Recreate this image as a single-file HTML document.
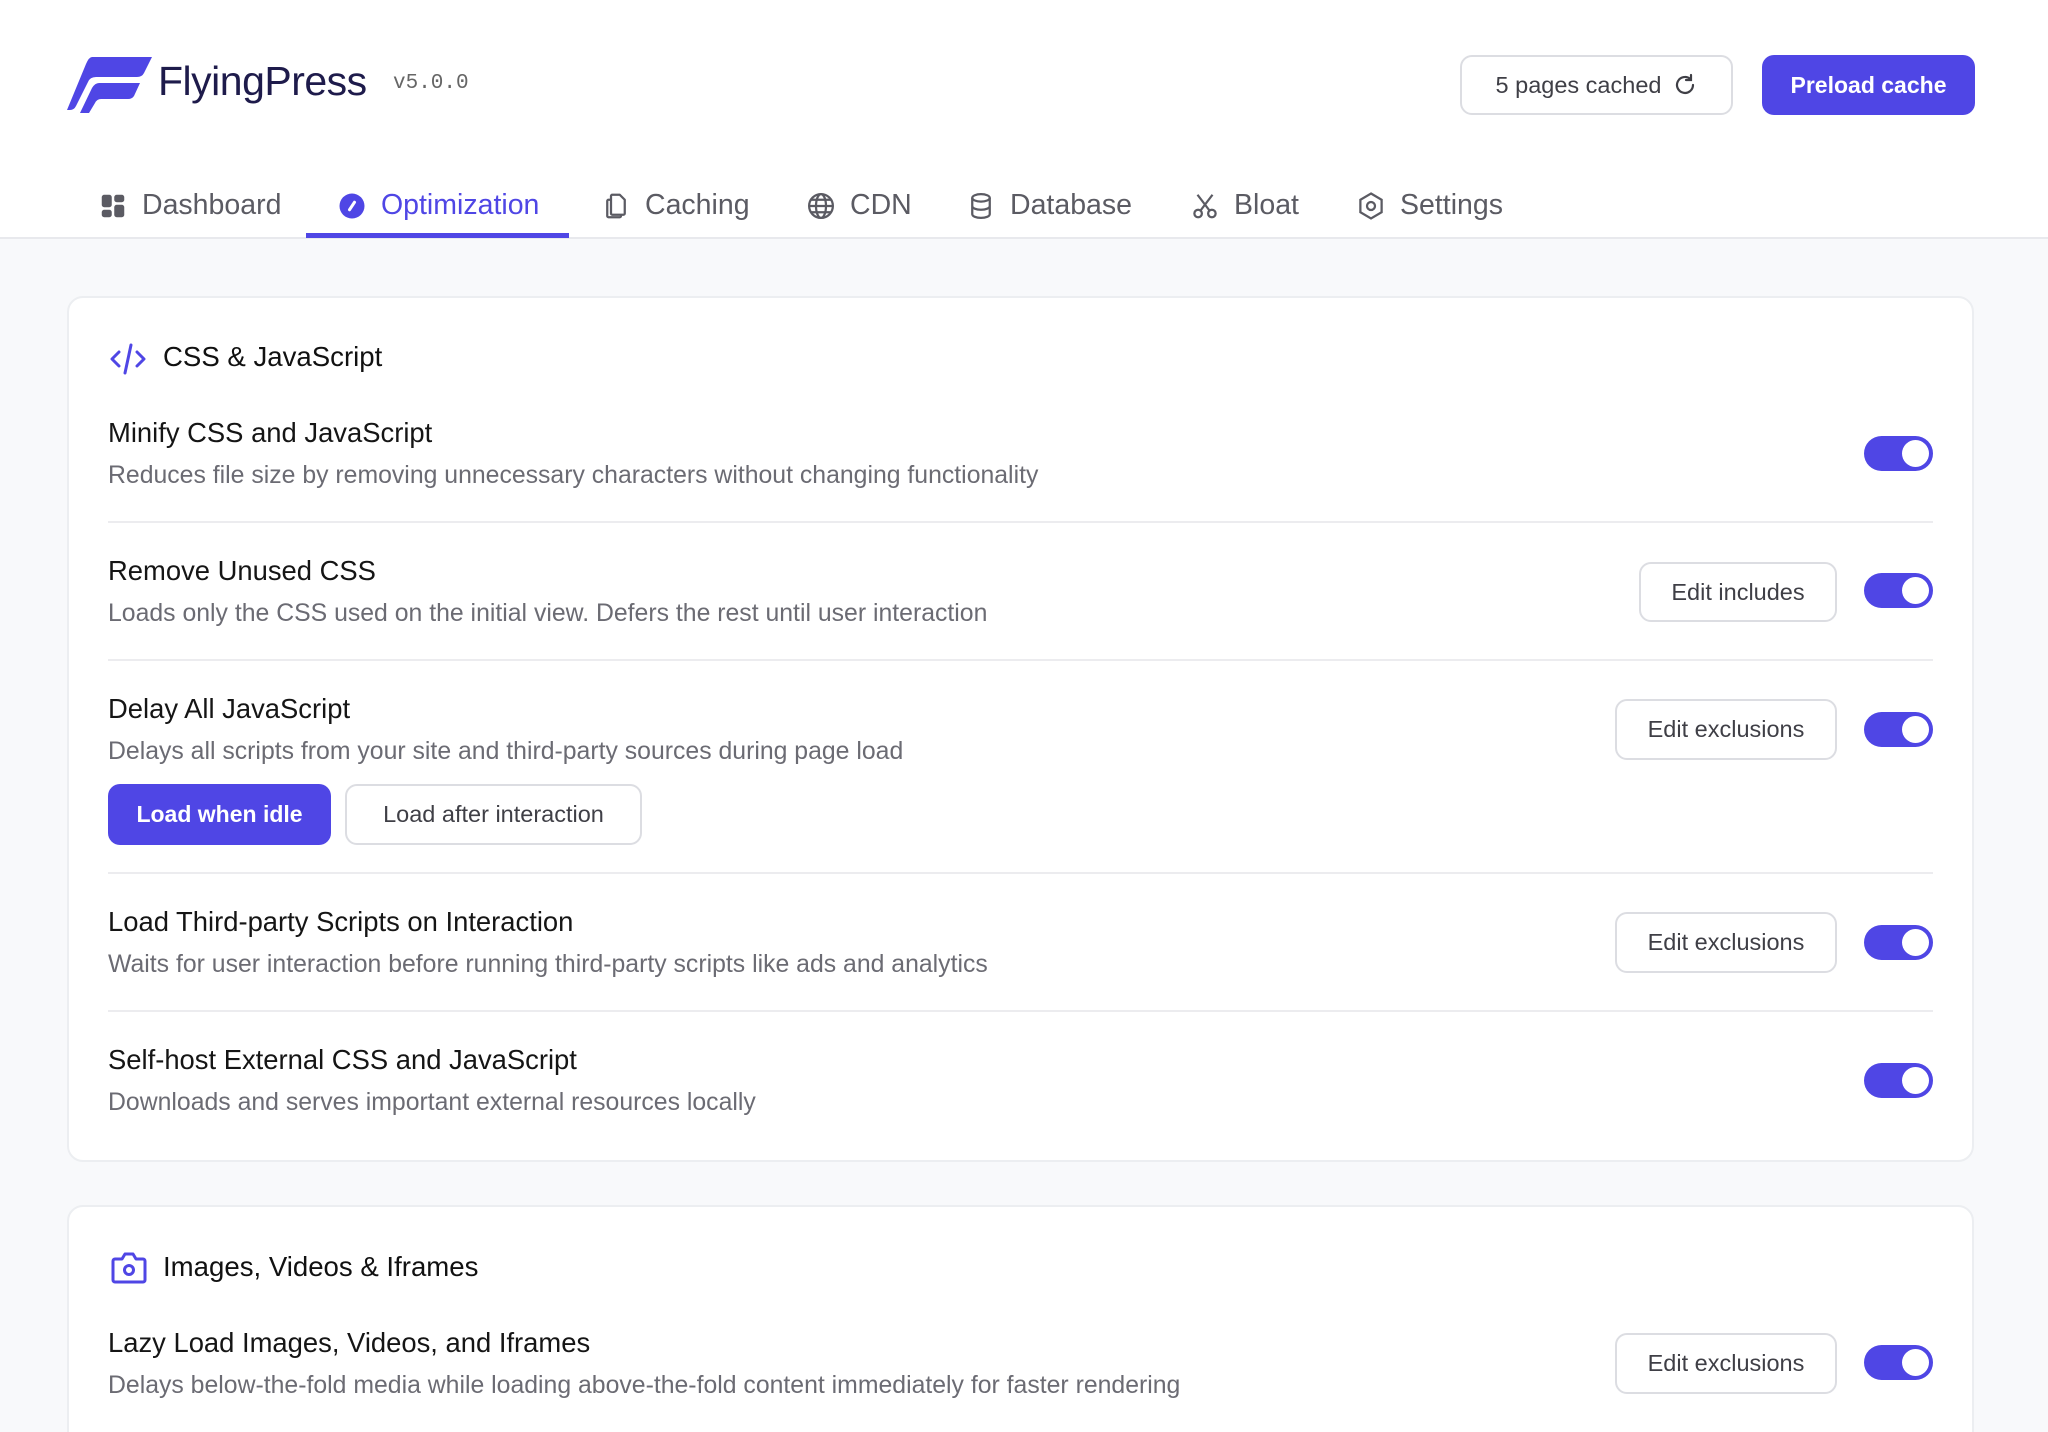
<!DOCTYPE html>
<html><head><meta charset="utf-8"><style>
*{box-sizing:border-box;margin:0;padding:0}
html,body{width:2048px;height:1432px;overflow:hidden}
body{background:#f8f9fb;font-family:"Liberation Sans",sans-serif;position:relative}
.hdr{position:absolute;left:0;top:0;width:2048px;height:239px;background:#fff;border-bottom:2px solid #e8e9ed}
.abs{position:absolute}
.brand{left:158px;top:58px;font-size:41px;color:#1e1b4b;letter-spacing:-0.5px}
.ver{left:393px;top:72px;font-family:"Liberation Mono",monospace;font-size:21px;color:#666}
.btn{position:absolute;border:2px solid #dcdde2;border-radius:12px;background:#fff;color:#3f3f46;font-size:23.5px;display:flex;align-items:center;justify-content:center}
.pbtn{position:absolute;background:#4f46e5;color:#fff;border-radius:12px;font-size:23px;font-weight:bold;display:flex;align-items:center;justify-content:center}
.tab{position:absolute;top:189px;font-size:28.5px;color:#5b5b63;display:flex;align-items:center;gap:14px}
.tab svg{width:30px;height:30px}
.card{position:absolute;left:67px;width:1907px;background:#fff;border:2px solid #eceef1;border-radius:16px}
.st{position:absolute;left:163px;font-size:27.6px;color:#111}
.t{position:absolute;left:108px;font-size:27.4px;color:#151515}
.d{position:absolute;left:108px;font-size:24.8px;color:#6b6b73}
.hr{position:absolute;left:108px;width:1825px;height:2px;background:#ececef}
.tg{position:absolute;left:1864px;width:69px;height:35px;border-radius:18px;background:#4f46e5}
.tg:after{content:"";position:absolute;right:4px;top:4px;width:27px;height:27px;border-radius:50%;background:#fff}
</style></head><body>
<div class="hdr"></div>
<svg class="abs" style="left:66px;top:56px" width="88" height="58" viewBox="0 0 88 58">
<path d="M26 1 H86 L78 17 Q76 21 71 21 H30 Q24 21 22 26 L10 50 Q8 54 4 54 H1 L20 8 Q23 1 26 1Z" fill="#4f46e5"/>
<path d="M33 27 H74 L68 40 Q66 43 62 43 H35 Q31 43 29 47 L23 57 H14 L26 32 Q29 27 33 27Z" fill="#4f46e5"/>
</svg>
<div class="abs brand">FlyingPress</div>
<div class="abs ver">v5.0.0</div>
<div class="btn" style="left:1460px;top:55px;width:273px;height:60px;gap:12px">5 pages cached <svg width="24" height="24" viewBox="0 0 24 24" fill="none" stroke="#3f3f46" stroke-width="2.2" stroke-linecap="round"><path d="M20 12a8 8 0 1 1-3-6.3"/><path d="M18 2v5h-5"/></svg></div>
<div class="pbtn" style="left:1762px;top:55px;width:213px;height:60px">Preload cache</div>

<div class="tab" style="left:98px"><svg viewBox="0 0 24 24" fill="#5b5b63"><rect x="3" y="3" width="8" height="10" rx="2"/><rect x="13" y="3" width="8" height="6" rx="2"/><rect x="3" y="15" width="8" height="6" rx="2"/><rect x="13" y="11" width="8" height="10" rx="2"/></svg>Dashboard</div>
<div class="tab" style="left:337px;color:#4f46e5"><svg viewBox="0 0 24 24"><circle cx="12" cy="12" r="10" fill="#4f46e5"/><path d="M10 15l4-6" stroke="#fff" stroke-width="2.4" stroke-linecap="round"/></svg>Optimization</div>
<div class="abs" style="left:306px;top:233px;width:263px;height:5px;background:#4f46e5"></div>
<div class="tab" style="left:601px"><svg viewBox="0 0 24 24" fill="none" stroke="#5b5b63" stroke-width="1.8" stroke-linejoin="round"><path d="M9 3h6l4 4v11a1 1 0 0 1-1 1H9a1 1 0 0 1-1-1V4a1 1 0 0 1 1-1z"/><path d="M8 7H6a1 1 0 0 0-1 1v12a1 1 0 0 0 1 1h9a1 1 0 0 0 1-1v-1"/></svg>Caching</div>
<div class="tab" style="left:806px"><svg viewBox="0 0 24 24" fill="none" stroke="#5b5b63" stroke-width="1.8"><circle cx="12" cy="12" r="9.5"/><ellipse cx="12" cy="12" rx="4" ry="9.5"/><path d="M2.5 12h19M4 7h16M4 17h16"/></svg>CDN</div>
<div class="tab" style="left:966px"><svg viewBox="0 0 24 24" fill="none" stroke="#5b5b63" stroke-width="1.8"><ellipse cx="12" cy="5.5" rx="7" ry="3"/><path d="M5 5.5v13c0 1.7 3.1 3 7 3s7-1.3 7-3v-13M5 12c0 1.7 3.1 3 7 3s7-1.3 7-3"/></svg>Database</div>
<div class="tab" style="left:1190px"><svg viewBox="0 0 24 24" fill="none" stroke="#5b5b63" stroke-width="1.8"><circle cx="6.5" cy="18" r="3"/><circle cx="17.5" cy="18" r="3"/><path d="M8.5 15.5L18 3M15.5 15.5L6 3"/></svg>Bloat</div>
<div class="tab" style="left:1356px"><svg viewBox="0 0 24 24" fill="none" stroke="#5b5b63" stroke-width="1.8"><path d="M12 2l8.5 5v10L12 22l-8.5-5V7z"/><circle cx="12" cy="12" r="3.2"/></svg>Settings</div>

<div class="card" style="top:296px;height:866px"></div>
<svg class="abs" style="left:109px;top:342px" width="38" height="34" viewBox="0 0 38 34" fill="none" stroke="#4f46e5" stroke-width="3" stroke-linecap="round" stroke-linejoin="round"><path d="M10 10L3 17l7 7M28 10l7 7-7 7M22 3l-6 28"/></svg>
<div class="st" style="top:341px">CSS &amp; JavaScript</div>

<div class="t" style="top:417px">Minify CSS and JavaScript</div>
<div class="d" style="top:462px">Reduces file size by removing unnecessary characters without changing functionality</div>
<div class="tg" style="top:436px"></div>
<div class="hr" style="top:521px"></div>

<div class="t" style="top:555px">Remove Unused CSS</div>
<div class="d" style="top:600px">Loads only the CSS used on the initial view. Defers the rest until user interaction</div>
<div class="btn" style="left:1639px;top:562px;width:198px;height:60px">Edit includes</div>
<div class="tg" style="top:573px"></div>
<div class="hr" style="top:659px"></div>

<div class="t" style="top:693px">Delay All JavaScript</div>
<div class="d" style="top:738px">Delays all scripts from your site and third-party sources during page load</div>
<div class="pbtn" style="left:108px;top:784px;width:223px;height:61px">Load when idle</div>
<div class="btn" style="left:345px;top:784px;width:297px;height:61px">Load after interaction</div>
<div class="btn" style="left:1615px;top:699px;width:222px;height:61px">Edit exclusions</div>
<div class="tg" style="top:712px"></div>
<div class="hr" style="top:872px"></div>

<div class="t" style="top:906px">Load Third-party Scripts on Interaction</div>
<div class="d" style="top:951px">Waits for user interaction before running third-party scripts like ads and analytics</div>
<div class="btn" style="left:1615px;top:912px;width:222px;height:61px">Edit exclusions</div>
<div class="tg" style="top:925px"></div>
<div class="hr" style="top:1010px"></div>

<div class="t" style="top:1044px">Self-host External CSS and JavaScript</div>
<div class="d" style="top:1089px">Downloads and serves important external resources locally</div>
<div class="tg" style="top:1063px"></div>

<div class="card" style="top:1205px;height:260px"></div>
<svg class="abs" style="left:110px;top:1251px" width="38" height="34" viewBox="0 0 38 34" fill="none" stroke="#4f46e5" stroke-width="3" stroke-linejoin="round"><path d="M5 8h7l3-5h8l3 5h7a2 2 0 0 1 2 2v19a2 2 0 0 1-2 2H5a2 2 0 0 1-2-2V10a2 2 0 0 1 2-2z"/><circle cx="19" cy="19" r="4.5"/></svg>
<div class="st" style="top:1251px">Images, Videos &amp; Iframes</div>
<div class="t" style="top:1327px">Lazy Load Images, Videos, and Iframes</div>
<div class="d" style="top:1372px">Delays below-the-fold media while loading above-the-fold content immediately for faster rendering</div>
<div class="btn" style="left:1615px;top:1333px;width:222px;height:61px">Edit exclusions</div>
<div class="tg" style="top:1345px"></div>
</body></html>
